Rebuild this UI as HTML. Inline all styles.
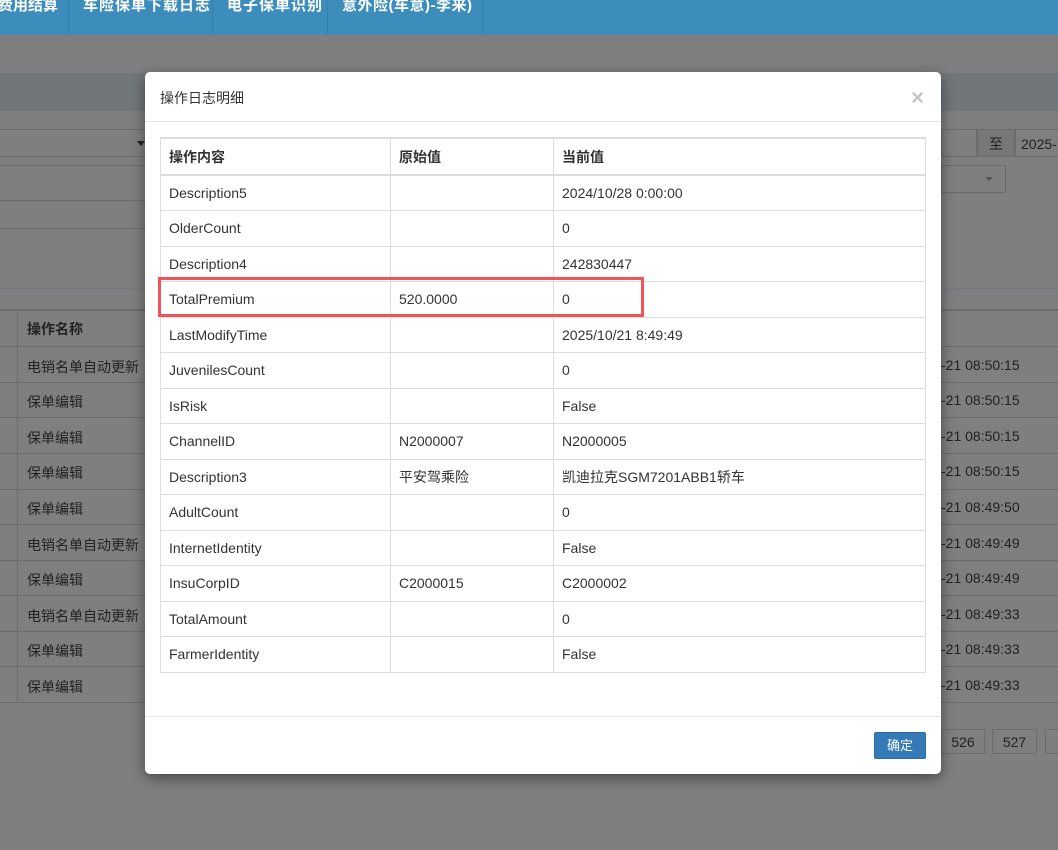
<!DOCTYPE html>
<html><head><meta charset="utf-8"><style>
*{box-sizing:border-box;margin:0;padding:0}
body{width:1058px;height:850px;overflow:hidden;background:#7f7f7f;font-family:"Liberation Sans","Noto Sans CJK SC",sans-serif;font-size:14px;color:#333;position:relative}
.nav{position:absolute;left:0;top:0;width:1058px;height:35px;background:#3c8dbc}
.nav span{position:absolute;top:-6px;color:#fff;font-weight:bold;font-size:15px}
.nav i{position:absolute;top:0;width:1px;height:35px;background:#3581ae}
.abs{position:absolute}
.bg{color:#222;font-size:14px}
.line{position:absolute;left:0;height:1px;background:#6c6c6c}
.modal{position:absolute;left:145px;top:72px;width:796px;height:702px;background:#fff;border-radius:5px;box-shadow:0 4px 14px rgba(0,0,0,.45)}
.mh{height:50px;border-bottom:1px solid #e5e5e5;padding:16px 15px;font-size:14px;color:#333}
.x{position:absolute;right:17px;top:13px;font-size:22px;color:#c4c4c4;font-weight:bold}
table{position:absolute;left:15px;top:65px;width:766px;border-collapse:collapse}
td,th{border:1px solid #ddd;height:35.5px;padding:0 8px;text-align:left;font-size:14px;color:#333;font-weight:normal}
th{font-weight:bold;height:37px;border-top:2px solid #ddd;border-bottom:2px solid #ddd}
.ft{position:absolute;left:0;top:644px;width:796px;border-top:1px solid #e5e5e5}
.btn{position:absolute;left:729px;top:660px;width:52px;height:27px;background:#337ab7;border:1px solid #2e6da4;color:#fff;font-size:13px;text-align:center;line-height:25px;border-radius:2px}
.red{position:absolute;left:158px;top:277px;width:486px;height:40px;border:3px solid #f0545a}
</style></head><body>
<div class="nav">
<span style="left:-2px">费用结算</span><i style="left:68px"></i>
<span style="left:83px;letter-spacing:1px">车险保单下载日志</span><i style="left:212px"></i>
<span style="left:227px;letter-spacing:1px">电子保单识别</span><i style="left:327px"></i>
<span style="left:342px;letter-spacing:0.5px">意外险(车意)-李来)</span><i style="left:482px"></i>
</div>
<div class="abs" style="left:0;top:73px;width:1058px;height:38px;background:#71767b"></div>
<div class="abs" style="left:0;top:129px;width:148px;height:28px;border-bottom:1px solid #6c6c6c;border-top:1px solid #6c6c6c"></div>
<div class="abs" style="left:137px;top:141px;border:4px solid transparent;border-top:5px solid #222"></div>
<div class="abs" style="left:941px;top:129px;width:36px;height:28px;border:1px solid #6c6c6c"></div>
<div class="abs" style="left:977px;top:129px;width:38px;height:28px;border:1px solid #6c6c6c;background:#777;text-align:center;line-height:28px;color:#222">至</div>
<div class="abs" style="left:1015px;top:129px;width:50px;height:28px;border:1px solid #6c6c6c;line-height:28px;padding-left:5px;color:#222">2025-</div>
<div class="abs" style="left:941px;top:165px;width:65px;height:28px;border:1px solid #6c6c6c"></div>
<div class="abs" style="left:985px;top:177px;border:4px solid transparent;border-top:4px solid #555"></div>
<div class="line" style="top:165px;width:148px"></div>
<div class="line" style="top:200px;width:148px"></div>
<div class="line" style="top:228px;width:148px"></div>
<div class="line" style="top:288px;width:1058px;background:#737880"></div>
<div class="line" style="top:309px;width:1058px;height:2px"></div>
<div class="abs" style="left:17px;top:310px;width:1px;height:392px;background:#6c6c6c"></div>
<div class="abs bg" style="left:27px;top:319px;font-weight:bold">操作名称</div>
<div class="line" style="top:346px;width:1058px"></div>
<div class="abs bg" style="left:27px;top:357px">电销名单自动更新</div>
<div class="abs bg" style="left:27px;top:392px">保单编辑</div>
<div class="abs bg" style="left:27px;top:428px">保单编辑</div>
<div class="abs bg" style="left:27px;top:463px">保单编辑</div>
<div class="abs bg" style="left:27px;top:499px">保单编辑</div>
<div class="abs bg" style="left:27px;top:535px">电销名单自动更新</div>
<div class="abs bg" style="left:27px;top:570px">保单编辑</div>
<div class="abs bg" style="left:27px;top:606px">电销名单自动更新</div>
<div class="abs bg" style="left:27px;top:641px">保单编辑</div>
<div class="abs bg" style="left:27px;top:677px">保单编辑</div>
<div class="abs bg" style="left:941px;top:357px">-21 08:50:15</div>
<div class="abs bg" style="left:941px;top:392px">-21 08:50:15</div>
<div class="abs bg" style="left:941px;top:428px">-21 08:50:15</div>
<div class="abs bg" style="left:941px;top:463px">-21 08:50:15</div>
<div class="abs bg" style="left:941px;top:499px">-21 08:49:50</div>
<div class="abs bg" style="left:941px;top:535px">-21 08:49:49</div>
<div class="abs bg" style="left:941px;top:570px">-21 08:49:49</div>
<div class="abs bg" style="left:941px;top:606px">-21 08:49:33</div>
<div class="abs bg" style="left:941px;top:641px">-21 08:49:33</div>
<div class="abs bg" style="left:941px;top:677px">-21 08:49:33</div>
<div class="line" style="top:382px;width:1058px"></div>
<div class="line" style="top:417px;width:1058px"></div>
<div class="line" style="top:453px;width:1058px"></div>
<div class="line" style="top:489px;width:1058px"></div>
<div class="line" style="top:524px;width:1058px"></div>
<div class="line" style="top:560px;width:1058px"></div>
<div class="line" style="top:595px;width:1058px"></div>
<div class="line" style="top:631px;width:1058px"></div>
<div class="line" style="top:666px;width:1058px"></div>
<div class="line" style="top:702px;width:1058px"></div>
<div class="abs bg" style="left:941px;top:729px;width:44px;height:25px;border:1px solid #6c6c6c;text-align:center;line-height:24px">526</div>
<div class="abs bg" style="left:992px;top:729px;width:45px;height:25px;border:1px solid #6c6c6c;text-align:center;line-height:24px">527</div>
<div class="abs bg" style="left:1045px;top:729px;width:20px;height:25px;border:1px solid #6c6c6c"></div>

<div class="modal">
<div class="mh">操作日志明细</div><div class="x">×</div>
<table>
<tr><th style="width:230px">操作内容</th><th style="width:163px">原始值</th><th>当前值</th></tr>
<tr><td>Description5</td><td></td><td>2024/10/28 0:00:00</td></tr>
<tr><td>OlderCount</td><td></td><td>0</td></tr>
<tr><td>Description4</td><td></td><td>242830447</td></tr>
<tr><td>TotalPremium</td><td>520.0000</td><td>0</td></tr>
<tr><td>LastModifyTime</td><td></td><td>2025/10/21 8:49:49</td></tr>
<tr><td>JuvenilesCount</td><td></td><td>0</td></tr>
<tr><td>IsRisk</td><td></td><td>False</td></tr>
<tr><td>ChannelID</td><td>N2000007</td><td>N2000005</td></tr>
<tr><td>Description3</td><td>平安驾乘险</td><td>凯迪拉克SGM7201ABB1轿车</td></tr>
<tr><td>AdultCount</td><td></td><td>0</td></tr>
<tr><td>InternetIdentity</td><td></td><td>False</td></tr>
<tr><td>InsuCorpID</td><td>C2000015</td><td>C2000002</td></tr>
<tr><td>TotalAmount</td><td></td><td>0</td></tr>
<tr><td>FarmerIdentity</td><td></td><td>False</td></tr>
</table>
<div class="ft"></div>
<div class="btn">确定</div>
</div>
<div class="red"></div>
</body></html>
